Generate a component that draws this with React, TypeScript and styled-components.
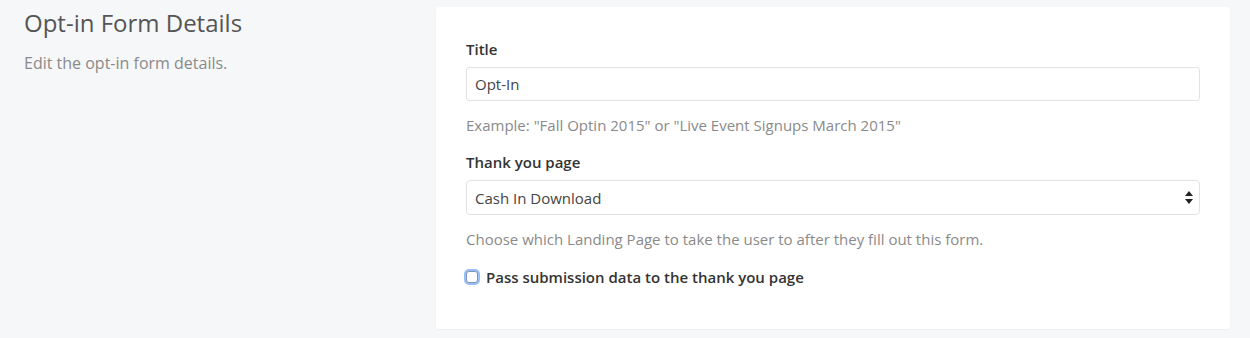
import { createGlobalStyle, styled } from "styled-components"

const Global = createGlobalStyle`
  html, body {
    margin: 0;
    padding: 0;
    background-color: #f6f7f9;
    font-family: "Open Sans", "Liberation Sans", sans-serif;
  }
`

const Page = styled.div`
  display: flex;
  align-items: flex-start;
  min-height: 338px;
  padding: 7px 20px 0 24px;
  box-sizing: border-box;
`

const Intro = styled.div`
  width: 412px;
  flex-shrink: 0;
`

const Heading = styled.h2`
  margin: 3px 0 0;
  font-size: 24px;
  line-height: 26px;
  font-weight: 400;
  color: #555;
`

const Lead = styled.p`
  margin: 16px 0 0;
  font-size: 16px;
  line-height: 22px;
  color: #8a8a8a;
`

const Card = styled.div`
  width: 794px;
  background: #fff;
  border-radius: 3px;
  box-shadow: 0 1px 2px rgba(0, 0, 0, 0.04);
  padding: 32px 30px 42px;
  box-sizing: border-box;
`

const Group = styled.div<{ $gap?: number }>`
  display: flex;
  flex-direction: column;
  margin-top: ${(p) => p.$gap ?? 0}px;
`

const Label = styled.label`
  font-size: 15px;
  line-height: 20px;
  font-weight: 600;
  color: #333;
  margin-bottom: 8px;
`

const Input = styled.input`
  height: 34px;
  box-sizing: border-box;
  border: 1px solid #e2e2e2;
  border-radius: 3px;
  padding: 0 8px;
  font-family: inherit;
  font-size: 15px;
  color: #444;
  outline: none;
`

const SelectWrap = styled.div`
  position: relative;
`

const Select = styled.select`
  width: 100%;
  height: 35px;
  box-sizing: border-box;
  border: 1px solid #e2e2e2;
  border-radius: 4px;
  background: #fff;
  padding: 0 8px;
  font-family: inherit;
  font-size: 15px;
  color: #444;
  appearance: none;
  outline: none;
`

const Arrows = styled.svg`
  position: absolute;
  right: 7px;
  top: 11px;
  pointer-events: none;
`

const Help = styled.p`
  margin: 14px 0 0;
  font-size: 15px;
  line-height: 20px;
  color: #8a8a8a;
`

const CheckRow = styled.label`
  display: flex;
  align-items: center;
  gap: 8px;
  margin-top: 18px;
  margin-left: -2px;
  font-size: 15px;
  line-height: 20px;
  font-weight: 600;
  color: #333;
`

const Box = styled.span`
  width: 10px;
  height: 10px;
  border: 1px solid #7f95b5;
  border-radius: 3px;
  background: #fff;
  box-shadow: 0 0 0 2px #99c0f5;
  margin-left: 2px;
`

export default function App() {
  return (
    <>
      <Global />
      <Page>
        <Intro>
          <Heading>Opt-in Form Details</Heading>
          <Lead>Edit the opt-in form details.</Lead>
        </Intro>
        <Card>
          <Group>
            <Label>Title</Label>
            <Input defaultValue="Opt-In" />
            <Help>Example: "Fall Optin 2015" or "Live Event Signups March 2015"</Help>
          </Group>
          <Group $gap={17}>
            <Label>Thank you page</Label>
            <SelectWrap>
              <Select defaultValue="cash">
                <option value="cash">Cash In Download</option>
              </Select>
              <Arrows width="8" height="13" viewBox="0 0 8 13">
                <path d="M4 0 L8 5 L0 5 Z M4 13 L8 8 L0 8 Z" fill="#222" />
              </Arrows>
            </SelectWrap>
            <Help>Choose which Landing Page to take the user to after they fill out this form.</Help>
          </Group>
          <CheckRow>
            <Box />
            Pass submission data to the thank you page
          </CheckRow>
        </Card>
      </Page>
    </>
  )
}
